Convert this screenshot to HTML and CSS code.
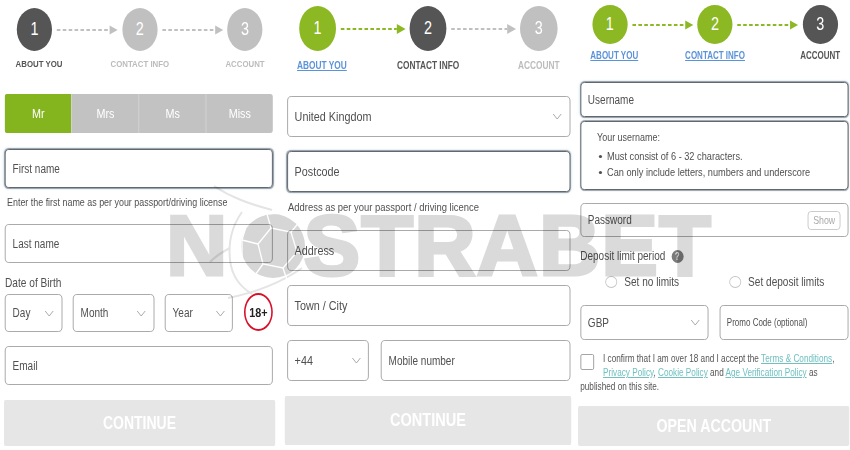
FILE: index.html
```html
<!DOCTYPE html>
<html lang="en">
<head>
<meta charset="utf-8">
<title>Registration steps</title>
<link rel="stylesheet" href="styles.css">
</head>
<body>
<main class="stage">
  <section class="panel panel-one">
    <div class="stepper">
      <span class="circle current">1</span>
      <svg class="conn" viewBox="0 0 87.5 12"><path class="dash-grey" d="M6 6H72"/><path class="head-grey" d="M72 1.5l10 4.5-10 4.5z"/></svg>
      <span class="circle todo">2</span>
      <svg class="conn" viewBox="0 0 87.5 12"><path class="dash-grey" d="M6 6H72"/><path class="head-grey" d="M72 1.5l10 4.5-10 4.5z"/></svg>
      <span class="circle todo">3</span>
      <span class="label l1 now">ABOUT YOU</span>
      <span class="label l2 off">CONTACT INFO</span>
      <span class="label l3 off">ACCOUNT</span>
    </div>
    <div class="seg">
      <span class="seg-item active">Mr</span>
      <span class="seg-item">Mrs</span>
      <span class="seg-item">Ms</span>
      <span class="seg-item">Miss</span>
    </div>
    <div class="field focus f-first">First name</div>
    <p class="hint h-first">Enter the first name as per your passport/driving license</p>
    <div class="field f-last">Last name</div>
    <p class="dob">Date of Birth</p>
    <div class="row dob-row">
      <div class="field select w-day">Day<svg class="chev" viewBox="0 0 12 7"><path d="M1 1l5 5 5-5"/></svg></div>
      <div class="field select w-month">Month<svg class="chev" viewBox="0 0 12 7"><path d="M1 1l5 5 5-5"/></svg></div>
      <div class="field select w-year">Year<svg class="chev" viewBox="0 0 12 7"><path d="M1 1l5 5 5-5"/></svg></div>
      <span class="adult">18+</span>
    </div>
    <div class="field f-email">Email</div>
    <div class="cta cta-one">CONTINUE</div>
  </section>

  <section class="panel panel-two">
    <div class="stepper big">
      <span class="circle done">1</span>
      <svg class="conn" viewBox="0 0 92 12"><path class="dash-green" d="M6 6H76"/><path class="head-green" d="M76 1l11 5-11 5z"/></svg>
      <span class="circle current">2</span>
      <svg class="conn" viewBox="0 0 92 12"><path class="dash-grey" d="M6 6H76"/><path class="head-grey" d="M76 1l11 5-11 5z"/></svg>
      <span class="circle todo">3</span>
      <a class="label l1 link">ABOUT YOU</a>
      <span class="label l2 now">CONTACT INFO</span>
      <span class="label l3 off">ACCOUNT</span>
    </div>
    <div class="field tall select s-country">United Kingdom<svg class="chev" viewBox="0 0 12 7"><path d="M1 1l5 5 5-5"/></svg></div>
    <div class="field tall focus s-post">Postcode</div>
    <p class="hint h-post">Address as per your passport / driving licence</p>
    <div class="field tall s-addr">Address</div>
    <div class="field tall s-town">Town / City</div>
    <div class="row s-phone">
      <div class="field tall select w-code">+44<svg class="chev" viewBox="0 0 12 7"><path d="M1 1l5 5 5-5"/></svg></div>
      <div class="field tall grow mobile">Mobile number</div>
    </div>
    <div class="cta cta-two">CONTINUE</div>
  </section>

  <section class="panel panel-three">
    <div class="stepper small">
      <span class="circle done">1</span>
      <svg class="conn" viewBox="0 0 87.5 12"><path class="dash-green" d="M6 6H72"/><path class="head-green" d="M72 1.5l10 4.5-10 4.5z"/></svg>
      <span class="circle done">2</span>
      <svg class="conn" viewBox="0 0 87.5 12"><path class="dash-green" d="M6 6H72"/><path class="head-green" d="M72 1.5l10 4.5-10 4.5z"/></svg>
      <span class="circle current">3</span>
      <a class="label l1 link">ABOUT YOU</a>
      <a class="label l2 link">CONTACT INFO</a>
      <span class="label l3 now">ACCOUNT</span>
    </div>
    <div class="field short focus t-user">Username</div>
    <div class="rules">
      <p class="rules-title">Your username:</p>
      <ul class="rules-list">
        <li>Must consist of 6 - 32 characters.</li>
        <li>Can only include letters, numbers and underscore</li>
      </ul>
    </div>
    <div class="field short t-pass">Password<span class="show">Show</span></div>
    <div class="limit"><span>Deposit limit period</span><span class="help">?</span></div>
    <div class="radios">
      <span class="radio-item r-a"><i class="radio"></i>Set no limits</span>
      <span class="radio-item r-b"><i class="radio"></i>Set deposit limits</span>
    </div>
    <div class="row t-money">
      <div class="field short select w-gbp">GBP<svg class="chev" viewBox="0 0 12 7"><path d="M1 1l5 5 5-5"/></svg></div>
      <div class="field short grow promo">Promo Code (optional)</div>
    </div>
    <div class="terms">
      <i class="check"></i>
      I confirm that I am over 18 and I accept the <a>Terms &amp; Conditions</a>, <a>Privacy Policy</a>, <a>Cookie Policy</a> and <a>Age Verification Policy</a> as published on this site.
    </div>
    <div class="cta cta-three">OPEN ACCOUNT</div>
  </section>
</main>

<div class="mark"><span class="mark-n">N</span><span class="mark-o">O</span>STRABET</div>
<svg class="ball" viewBox="0 0 140 140">
  <g class="ball-line">
    <path d="M44 26c18 12 36 18 58 24"/>
    <path d="M72 52c-10 14-14 30-12 48s12 28 22 34"/>
    <path d="M132 108c-20 14-44 24-74 30"/>
    <path d="M60 88c-8 4-14 8-20 14"/>
  </g>
  <circle class="ball-fill" cx="103" cy="86" r="32"/>
  <g class="ball-cut">
    <path d="M88 84l13-16 20 4 6 20-14 16-20-4z"/>
    <path d="M101 68l-4-14M121 72l10-12M127 92l8 4M113 108l4 12M93 104l-10 14M88 84l-16-4"/>
    <path d="M97 54l22-2M72 80l6-20 19-6M83 118l-11-18v-20"/>
  </g>
</svg>
</body>
</html>
```

FILE: styles.css
```css
* { box-sizing: border-box; }
html, body { margin: 0; padding: 0; }
body {
  width: 850px;
  height: 450px;
  overflow: hidden;
  position: relative;
  background: #fff;
  font-family: "Liberation Sans", Arial, sans-serif;
  color: #505050;
}
p { margin: 0; }

/* Each form is a horizontally squeezed capture: laid out at 125% width, scaled to 80% */
.stage { display: flex; width: 850px; height: 450px; }
.panel {
  display: flex;
  flex-direction: column;
  flex: none;
  height: 450px;
  transform: scaleX(.8);
  transform-origin: 0 0;
  filter: blur(.35px);
}
.panel-one { width: 350px; margin-right: -70px; padding: 8px 0 0 6.25px; }
.panel-two { width: 366.25px; margin-right: -142.5px; padding: 6px 0 0 8.75px; }
.panel-three { width: 346.25px; padding: 5px 0 0 8.75px; transform-origin: 100% 0; }

/* stepper */
.stepper {
  display: grid;
  grid-template-columns: 44px 87.5px 44px 87.5px 44px;
  grid-template-rows: 43px auto;
  margin-left: 15px;
  align-items: center;
  font-size: 9.8px;
}
.stepper.big { grid-template-columns: 46.25px 92px 46.25px 92px 46.25px; grid-template-rows: 45px auto; font-size: 10.4px; }
.stepper.small { grid-template-rows: 39px auto; font-size: 10px; }
.circle {
  height: 100%;
  border-radius: 50%;
  display: flex;
  align-items: center;
  justify-content: center;
  color: #fff;
  font-size: 18px;
}
.current { background: #555; }
.todo { background: #c0c0c0; }
.done { background: #8bb823; }
.conn { width: 100%; height: 12px; }
.conn path[class^="dash"] { fill: none; stroke-width: 2; stroke-dasharray: 4.5 2.9; }
.dash-grey { stroke: #c0c0c0; }
.head-grey { fill: #c0c0c0; }
.dash-green { stroke: #8bb823; }
.head-green { fill: #8bb823; }
.label {
  grid-row: 2;
  justify-self: center;
  white-space: nowrap;
  font-weight: 700;
  line-height: 12px;
  margin-top: 7px;
}
.stepper.big .label { margin-top: 9px; }
.stepper.small .label { margin-top: 6px; }
.l1 { grid-column: 1; margin-left: 11px; }
.l2 { grid-column: 3; }
.l3 { grid-column: 5; }
.now { color: #555; }
.off { color: #bcbcbc; }
.link { color: #5b93d8; text-decoration: underline; }

/* title buttons */
.seg {
  display: flex;
  width: 335px;
  height: 39px;
  margin-top: 24px;
  border-radius: 3px;
  overflow: hidden;
  background: #c2c2c2;
}
.seg-item {
  flex: 1;
  display: flex;
  align-items: center;
  justify-content: center;
  color: #fff;
  font-size: 13.5px;
  border-left: 1px solid #d6d6d6;
}
.seg-item.active { background: #84b51f; border-left: 0; }

/* fields */
.field {
  display: flex;
  align-items: center;
  justify-content: space-between;
  height: 39px;
  padding: 0 8.5px;
  border: 1px solid #a0a0a0;
  border-radius: 5px;
  font-size: 12.5px;
  white-space: nowrap;
}
.field.focus { border-color: #4f5860; box-shadow: 0 0 1px .5px rgba(90, 100, 112, .6), 0 0 4px rgba(120, 170, 220, .3); }
.field.tall { height: 41px; font-size: 13.5px; }
.field.short { height: 35px; }
.chev { width: 13px; height: 7px; flex: none; fill: none; stroke: #a0a0a0; stroke-width: 1; }
.hint { font-size: 11.15px; line-height: 13px; white-space: nowrap; }
.row { display: flex; }
.grow { flex: 1; }

.f-first { width: 335px; margin-top: 16px; }
.h-first { margin: 8px 0 0 2.5px; }
.f-last { width: 335px; margin-top: 15px; }
.dob { font-size: 12.7px; line-height: 14px; margin-top: 13px; }
.dob-row { width: 335px; margin-top: 4px; align-items: center; }
.dob-row .field { height: 38px; }
.w-day { width: 71.25px; }
.w-month { width: 101.25px; margin-left: 13.75px; }
.w-year { width: 85px; margin-left: 13.75px; }
.adult {
  width: 36.25px;
  height: 38px;
  margin: -1px 0 1px 13.75px;
  border: 2px solid #d8102a;
  border-radius: 50%;
  display: flex;
  align-items: center;
  justify-content: center;
  color: #222;
  font-size: 13.5px;
  font-weight: 700;
}
.f-email { width: 335px; margin-top: 14px; }
.cta {
  display: flex;
  align-items: center;
  justify-content: center;
  background: #e6e6e6;
  color: #fff;
  font-size: 17.5px;
  font-weight: 700;
  border-radius: 2px;
}
.cta-one { width: 338.75px; height: 46px; margin: 15px 0 0 -1.25px; }

/* second column */
.stepper.big + .field { margin-top: 24px; }
.s-country, .s-post, .s-addr, .s-town, .s-phone { width: 353.75px; }
.s-post { margin-top: 14px; }
.h-post { margin: 9px 0 0 1.25px; font-size: 11.8px; }
.s-addr { margin-top: 16px; }
.s-town { margin-top: 14px; }
.s-phone { margin-top: 14px; }
.w-code { width: 102.5px; margin-right: 15px; }
.field.mobile { font-size: 12.5px; }
.cta-two { width: 357.5px; height: 49px; margin: 15px 0 0 -2.5px; font-size: 18.2px; }

/* third column */
.t-user { width: 335px; margin-top: 20px; }
.rules {
  width: 335px;
  height: 69px;
  margin-top: 4px;
  padding: 8px 0 0 20px;
  border: 1px solid #4f5860;
  box-shadow: 0 0 1px .5px rgba(90, 100, 112, .6);
  border-radius: 5px;
  font-size: 11.2px;
}
.rules-title { line-height: 14px; }
.rules-list { list-style: none; margin: 5px 0 0; padding: 0 0 0 12.5px; font-size: 11.5px; }
.rules-list li { line-height: 15.5px; position: relative; white-space: nowrap; }
.rules-list li::before {
  content: "";
  position: absolute;
  left: -10px;
  top: 6px;
  width: 4px;
  height: 3px;
  border-radius: 50%;
  background: #505050;
}
.field.t-pass { width: 335px; height: 34px; margin-top: 13px; }
.show {
  display: flex;
  align-items: center;
  justify-content: center;
  width: 41.25px;
  height: 19px;
  border: 1px solid #c6c6c6;
  border-radius: 4px;
  color: #a9a9a9;
  font-size: 11px;
}
.limit { display: flex; align-items: center; gap: 7.5px; margin-top: 11px; height: 16px; font-size: 12.5px; }
.help {
  width: 15px;
  height: 13px;
  border-radius: 50%;
  background: #7b7b7b;
  color: #ddd;
  font-size: 10px;
  font-weight: 700;
  display: flex;
  align-items: center;
  justify-content: center;
}
.radios { display: flex; margin-top: 11px; height: 14px; font-size: 12.6px; }
.radio-item { display: flex; align-items: center; gap: 8.75px; white-space: nowrap; }
.r-a { margin-left: 31.25px; }
.r-b { margin-left: 62.5px; }
.radio { width: 15px; height: 12px; border: 1px solid #c4c4c4; border-radius: 50%; display: block; }
.t-money { width: 335px; margin-top: 16px; }
.w-gbp { width: 160px; margin-right: 13.75px; }
.field.promo { font-size: 10px; }
.terms { width: 322px; margin-top: 12px; font-size: 10.25px; line-height: 14px; color: #555; }
.terms a { color: #6fc0c0; text-decoration: underline; }
.check {
  float: left;
  width: 17.5px;
  height: 16px;
  margin: 2px 11px 0 0;
  border: 1px solid #9a9a9a;
  border-radius: 2px;
}
.cta-three { width: 339px; height: 40px; margin: 12px 0 0 -2.5px; font-size: 17.8px; }

/* brand watermark laid over the capture */
.mark {
  position: absolute;
  left: 166px;
  top: 196px;
  font-size: 85px;
  line-height: 100px;
  font-weight: 700;
  letter-spacing: 1px;
  color: #dadada;
  -webkit-text-stroke: 3px #dadada;
  white-space: nowrap;
  pointer-events: none;
  mix-blend-mode: multiply;
  filter: blur(.6px);
}
.mark-n { margin-right: 8px; }
.mark-o { color: transparent; -webkit-text-stroke: 0 transparent; }
.ball {
  position: absolute;
  left: 170px;
  top: 160px;
  width: 140px;
  height: 140px;
  pointer-events: none;
  fill: none;
  mix-blend-mode: multiply;
  filter: blur(.4px);
}
.ball-fill { fill: #d6d6d6; }
.ball-cut { stroke: #fff; stroke-width: 1.3; }
.ball-line { stroke: #e4e4e4; stroke-width: 2; }
```
